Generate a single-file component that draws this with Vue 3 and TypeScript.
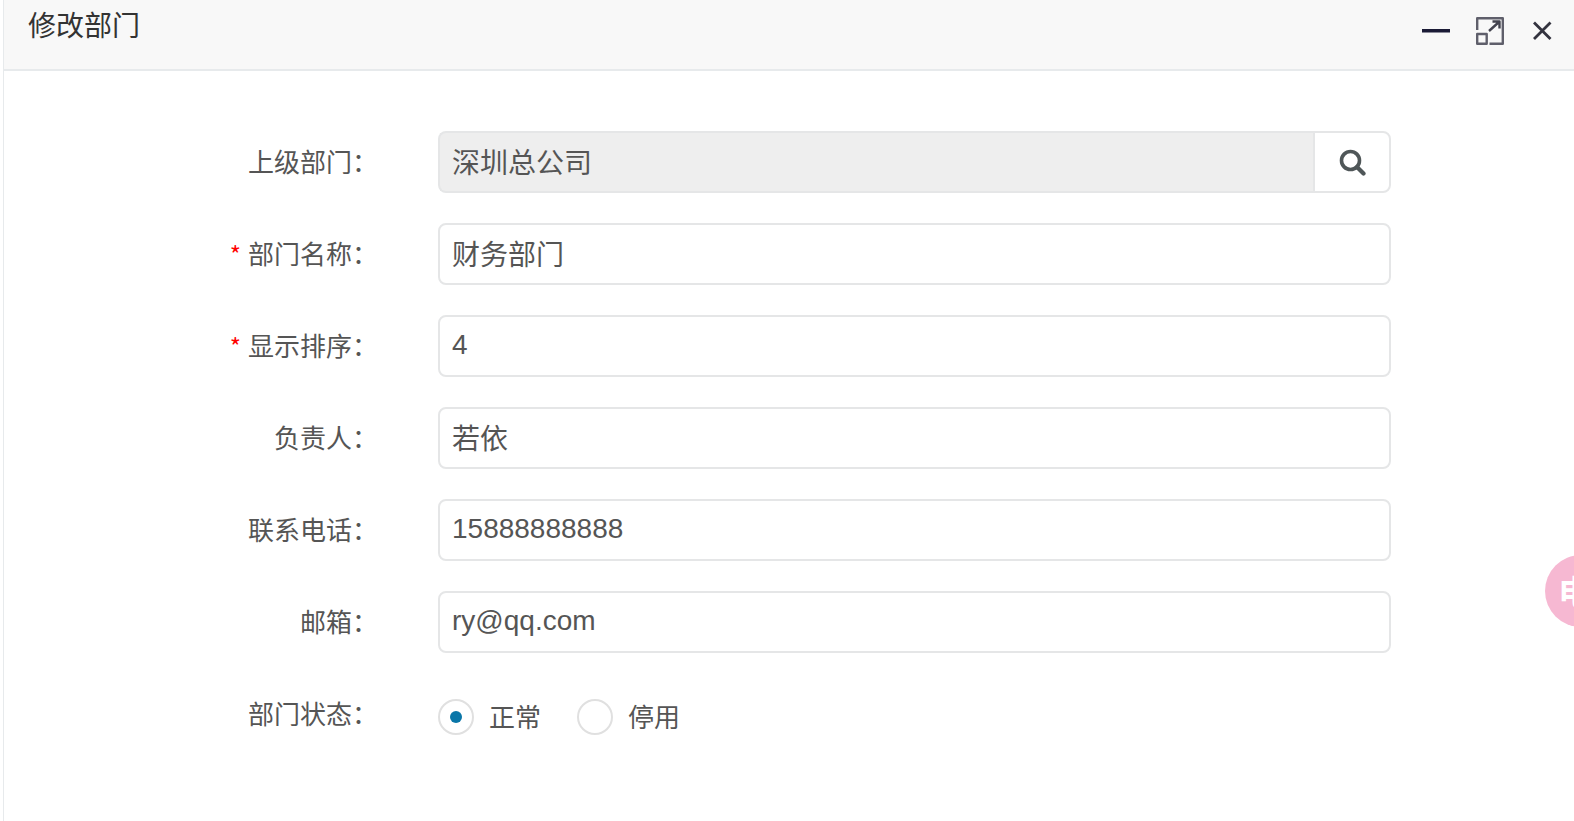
<script setup lang="ts">
import { ref } from 'vue'

interface Field {
  label: string
  value: string
  required?: boolean
  picker?: boolean
}

const fields: Field[] = [
  { label: '上级部门', value: '深圳总公司', picker: true },
  { label: '部门名称', value: '财务部门', required: true },
  { label: '显示排序', value: '4', required: true },
  { label: '负责人', value: '若依' },
  { label: '联系电话', value: '15888888888' },
  { label: '邮箱', value: 'ry@qq.com' },
]

const status = ref('0')
</script>

<template>
  <div class="layer">
    <header class="layer-title">
      <span class="title-text">修改部门</span>
      <div class="layer-tools">
        <svg class="tool" width="28" height="28" viewBox="0 0 28 28">
          <rect x="0" y="12" width="28" height="3.500" fill="#1b1b36" />
        </svg>
        <svg class="tool" width="28" height="28" viewBox="0 0 28 28" fill="none" stroke="#5f5f6b" stroke-width="2.400" stroke-linejoin="round">
          <path d="M1.200 13V1.200H26.800V26.800H13.500" />
          <rect x="1.200" y="17" width="9.500" height="9.800" />
          <path d="M13 14L23 5M16.500 4.500H23.500V11.500" stroke="#44444f" />
        </svg>
        <svg class="tool close" width="20" height="20" viewBox="0 0 20 20" fill="none" stroke="#33333f" stroke-width="2.800">
          <path d="M2 1.500L18.500 18M18.500 1.500L2 18" />
        </svg>
      </div>
    </header>

    <form class="form" @submit.prevent>
      <div v-for="field in fields" :key="field.label" class="row">
        <label class="label">
          <span v-if="field.required" class="star">*</span>{{ field.label }}：
        </label>
        <div class="control" :class="{ 'has-picker': field.picker }">
          <input class="input" :class="{ readonly: field.picker }" :value="field.value" :readonly="field.picker" />
          <span v-if="field.picker" class="addon">
            <svg width="28" height="28" viewBox="0 0 28 28" fill="none" stroke="#4f5658">
              <circle cx="12.500" cy="12.500" r="9" stroke-width="3.600" />
              <path d="M19 19L25.500 25.500" stroke-width="4.200" stroke-linecap="round" />
            </svg>
          </span>
        </div>
      </div>

      <div class="row status-row">
        <label class="label">部门状态：</label>
        <div class="radios">
          <label class="radio-item" @click="status = '0'">
            <span class="radio" :class="{ checked: status === '0' }"></span>
            <span>正常</span>
          </label>
          <label class="radio-item" @click="status = '1'">
            <span class="radio" :class="{ checked: status === '1' }"></span>
            <span>停用</span>
          </label>
        </div>
      </div>
    </form>

    <div class="float-ball"><span>电</span></div>
  </div>
</template>

<style>
html,
body {
  margin: 0;
  background: #fff;
  overflow: hidden;
}
</style>

<style scoped>
.layer {
  position: relative;
  width: 1571px;
  height: 821px;
  margin-left: 3px;
  box-sizing: border-box;
  border-left: 1px solid #e7eaec;
  overflow: hidden;
  background: #fff;
  font-family: "Liberation Sans", "Noto Sans CJK SC", sans-serif;
  color: #676a6c;
}

.layer-title {
  display: flex;
  justify-content: space-between;
  align-items: flex-start;
  height: 69px;
  padding-left: 24px;
  padding-right: 22px;
  background: #f8f8f8;
  border-bottom: 2px solid #e7eaec;
}

.title-text {
  font-size: 28px;
  line-height: 49px;
  color: #333;
  font-family: "Noto Sans CJK SC", sans-serif;
}

.layer-tools {
  display: flex;
  align-items: center;
  gap: 26px;
  height: 62px;
}

.close {
  margin-left: 2px;
}

.form {
  display: flex;
  flex-direction: column;
  gap: 30px;
  padding-top: 60px;
}

.row {
  display: flex;
  align-items: center;
  height: 62px;
}

.label {
  width: 374px;
  flex: none;
  padding-bottom: 3px;
  text-align: right;
  font-size: 26px;
  color: #555;
  font-family: "Noto Sans CJK SC", sans-serif;
}

.star {
  color: #f00;
  margin-right: 7px;
  font-size: 24px;
}

.control {
  display: flex;
  width: 953px;
  margin-left: 60px;
  height: 62px;
}

.input {
  flex: 1;
  min-width: 0;
  box-sizing: border-box;
  height: 100%;
  padding: 0 12px 2px;
  border: 2px solid #e5e6e7;
  border-radius: 8px;
  outline: none;
  font-size: 28px;
  font-family: "Liberation Sans", "Noto Sans CJK SC", sans-serif;
  color: #555;
  background: #fff;
}

.input.readonly {
  background: #eee;
  border-radius: 8px 0 0 8px;
  border-right: 0;
}

.addon {
  display: flex;
  align-items: center;
  justify-content: center;
  width: 78px;
  box-sizing: border-box;
  border: 2px solid #e5e6e7;
  border-radius: 0 8px 8px 0;
  background: #fff;
}

.radios {
  display: flex;
  align-items: center;
  gap: 36px;
  margin-left: 60px;
  padding-top: 6px;
}

.radio-item {
  display: flex;
  align-items: center;
  gap: 15px;
  font-size: 26px;
  color: #555;
  font-family: "Noto Sans CJK SC", sans-serif;
}

.radio-item span:last-child {
  padding-bottom: 4px;
}

.radio {
  position: relative;
  display: block;
  width: 36px;
  height: 36px;
  box-sizing: border-box;
  border: 2px solid #e0e0e0;
  border-radius: 50%;
}

.radio.checked::after {
  content: "";
  position: absolute;
  left: 10px;
  top: 10px;
  width: 12px;
  height: 12px;
  border-radius: 50%;
  background: #0a76a8;
}

.float-ball {
  position: absolute;
  left: 1541px;
  top: 555px;
  width: 72px;
  height: 72px;
  border-radius: 50%;
  background: #f6b8d2;
  color: #fff;
  font-size: 34px;
  font-weight: 700;
  line-height: 72px;
  padding-left: 13px;
  box-sizing: border-box;
  font-family: "Noto Sans CJK SC", sans-serif;
}
</style>
